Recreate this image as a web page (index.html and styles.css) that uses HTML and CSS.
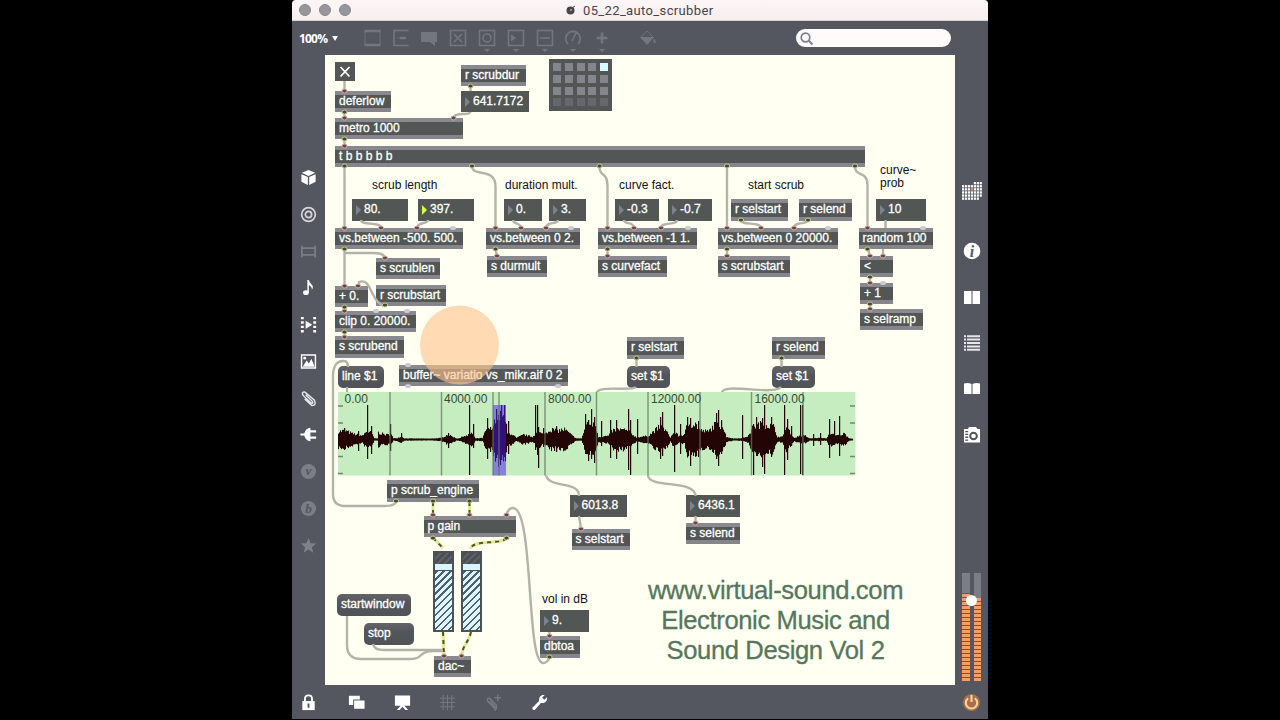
FILE: index.html
```
<!DOCTYPE html>
<html lang="en">
<head>
    <meta charset="UTF-8">
    <meta name="viewport" content="width=device-width, initial-scale=1.0">
    <title>05_22_auto_scrubber</title>
    <link rel="stylesheet" href="styles.css">
</head>
<body>
    <div class="window">
        <header class="titlebar">
            <div class="lights"><span></span><span></span><span></span></div>
            <div class="title">
                <svg width="10" height="10" viewBox="0 0 10 10"><circle cx="4.5" cy="5.5" r="4" fill="#45454a"/><path d="M6 3L9 1" stroke="#45454a"/><circle cx="5" cy="5" r="1" fill="#aaa"/></svg>
                <span>05_22_auto_scrubber</span>
            </div>
        </header>

        <nav class="toolbar">
            <div class="zoomLevel">100% <i></i></div>
            <div class="tools">
                <svg viewBox="0 0 20 26"><path class="thick" d="M2.500 6H18.500M2.500 20H18.500"/><path class="thin" d="M3 6V20M18 6V20"/></svg>
                <svg viewBox="0 0 20 26"><path d="M17.500 5.500H3V20.500H17.500"/><path class="thick" d="M9 13H15"/><path class="thin" d="M6 13H9"/></svg>
                <svg viewBox="0 0 20 26"><path class="solid" d="M2 7H18V17H16V21L11 17H2Z"/></svg>
                <svg viewBox="0 0 20 26"><path d="M2.5 5.5H17.5V20.5H2.5ZM6 9L14 17M14 9L6 17"/></svg>
                <svg viewBox="0 0 20 26"><path d="M2.5 5.5H17.5V20.5H2.5Z"/><circle cx="10" cy="13" r="4"/><path class="solid" d="M7 24H13L10 27Z"/></svg>
                <svg viewBox="0 0 20 26"><path d="M2.5 5.5H17.5V20.5H2.5Z"/><path class="solid" d="M5 9.5L10 13L5 16.5ZM7 24H13L10 27Z"/></svg>
                <svg viewBox="0 0 20 26"><path d="M2.5 5.5H17.5V20.5H2.5ZM5 13H15"/><path class="solid" d="M7 24H13L10 27Z"/></svg>
                <svg viewBox="0 0 20 26"><path d="M5 19A7.3 7.3 0 1 1 15 19M9 16L13 8"/><path class="solid" d="M7 24H13L10 27Z"/></svg>
                <svg viewBox="0 0 20 26"><path class="thick" d="M4.5 13H15.5M10 7.5V18.5"/><path class="solid" d="M7 24H13L10 27Z"/></svg>
            </div>
            <svg class="bucket" viewBox="0 0 20 20"><path class="thin" d="M3 9L9 3L15 9"/><path class="solid" d="M2 9H16L9 17ZM16 10Q19 15 17 15Q14.5 15 16 10Z"/></svg>
            <div class="search">
                <svg width="14" height="14" viewBox="0 0 14 14"><circle cx="5.5" cy="5.5" r="4.3" fill="none" stroke="#7d7f8b" stroke-width="1.7"/><path d="M8.8 8.8L12.5 12.5" stroke="#7d7f8b" stroke-width="2"/></svg>
            </div>
        </nav>

        <main class="middle">
            <aside class="leftbar">
                <svg viewBox="0 0 20 20"><path class="white" d="M10 2L17 5L10 8.3L3 5ZM2.5 6.5L9.3 9.6V18L2.5 14.5ZM17.5 6.5L10.7 9.6V18L17.5 14.5Z"/></svg>
                <svg viewBox="0 0 20 20"><g fill="none" stroke="#d5d6db" stroke-width="1.8"><circle cx="10" cy="10" r="7.2"/><circle cx="10" cy="10" r="3.3"/></g></svg>
                <svg viewBox="0 0 20 20"><path d="M3 4V16M17 4V16M3 6.5H17M3 13.5H17" fill="none" stroke="#7a7c86" stroke-width="1.9"/></svg>
                <svg viewBox="0 0 20 20"><ellipse class="white" cx="7.3" cy="15.5" rx="3" ry="2.5"/><path class="white" d="M8.8 2H10.4Q11 5 13 6.5Q16 9 13.5 12.5Q14 9 10.4 7.5V15.5H8.8Z"/></svg>
                <svg viewBox="0 0 20 20"><path d="M3.5 2V19M16.5 2V19" stroke="#fff" stroke-width="3" stroke-dasharray="2.6 2"/><path class="white" d="M7 6L14 10.3L7 14.5Z"/></svg>
                <svg viewBox="0 0 20 20"><path d="M2.7 3.2H17.3V16.8H2.7Z" fill="none" stroke="#fff" stroke-width="1.5"/><path class="white" d="M4 15.5L8 9L10.5 12L13 7L16.5 15.5Z"/><circle class="white" cx="6" cy="6.5" r="1.5"/></svg>
                <svg viewBox="0 0 20 20"><path d="M7 6L14 13Q15.5 15.5 13 15L4.5 7Q2 3 6 3L16 11.5Q19 17 13.5 17.5L6 10.5" fill="none" stroke="#e8e8ec" stroke-width="1.5"/></svg>
                <svg viewBox="0 0 20 20"><path class="white" d="M1.5 9H5.5Q7 3.5 12 3V5.5H18V7.8H12V12.2H18V14.5H12V17Q7 16.5 5.5 11H1.5Z"/></svg>
                <svg viewBox="0 0 20 20"><circle cx="10" cy="10" r="8" fill="#7b7d87"/><text x="10" y="14">v</text></svg>
                <svg viewBox="0 0 20 20"><circle cx="10" cy="10" r="8" fill="#7b7d87"/><text x="10" y="15">b</text></svg>
                <svg viewBox="0 0 20 20"><path fill="#80828b" d="M10 2L12.2 7.6L18 8L13.5 11.8L15 17.6L10 14.3L5 17.6L6.5 11.8L2 8L7.8 7.6Z"/></svg>
            </aside>

            <section class="patcher" id="patcher">
                <svg class="cords" id="cords" viewBox="325 55 630 630"></svg>
                <div class="credits">www.virtual-sound.com<br>Electronic Music and<br>Sound Design Vol 2</div>
            </section>

            <aside class="rightbar">
                <div class="panels">
                    <svg class="gridIcon" id="gridIcon" viewBox="0 0 22 20"></svg>
                    <svg viewBox="0 0 20 20"><circle class="white" cx="10" cy="10" r="8.3"/><text class="info" x="10" y="15.5">i</text></svg>
                    <svg viewBox="0 0 20 20"><path class="white" d="M2 4H9.5V17H2ZM10.5 4H18V17H10.5Z"/></svg>
                    <svg viewBox="0 0 20 20"><path d="M2 3.2H4M5 3.2H18M2 6.6H4M5 6.6H18M2 10H4M5 10H18M2 13.4H4M5 13.4H18M2 16.8H4M5 16.8H18" stroke="#e6e6ea" stroke-width="2"/></svg>
                    <svg viewBox="0 0 20 20"><path class="white" d="M2 4.5Q6 3.5 9.5 5V15H2ZM10.5 5Q14 3.5 18 4.5V15H10.5Z"/></svg>
                    <svg viewBox="0 0 20 20"><path class="white" d="M2 4H6L7 2H14L15.5 4H18V17.5H2Z"/><circle cx="11.5" cy="11" r="3.3" fill="#fff" stroke="#50535b" stroke-width="2"/><path d="M4.7 6V16" stroke="#50535b" stroke-width="3" stroke-dasharray="1.3 1.5"/></svg>
                </div>
                <div class="volume">
                    <div class="meter"><i style="height: 88px"></i></div>
                    <div class="meter"><i style="height: 83px"></i></div>
                    <b class="knob"></b>
                </div>
            </aside>
        </main>

        <footer class="bottombar">
            <svg viewBox="0 0 20 20"><path d="M6.3 9V6Q6.3 2.5 10 2.5T13.7 6V9" fill="none" stroke="#fff" stroke-width="2"/><path class="white" d="M3.5 8.5H16.5V18H3.5Z"/><path d="M10 11V15.5" stroke="#50535b" stroke-width="2"/></svg>
            <svg viewBox="0 0 20 20"><path class="white" d="M2 3H13.5V6.8H6.5V12.5H2ZM7.5 8H18.5V16.5H7.5Z"/></svg>
            <svg viewBox="0 0 20 20"><path class="white" d="M2 2.5H18V13.5H12L16 18H13L10 14.5L7 18H4L8 13.5H2Z"/></svg>
            <svg viewBox="0 0 20 20"><path d="M5.5 2V18M10 2V18M14.5 2V18M2 5.5H18M2 10H18M2 14.5H18" stroke="#777983"/></svg>
            <svg viewBox="0 0 20 20"><path d="M6 8L11 14Q12.5 15.5 11 16L4 9Q2 5.5 6 5.5L13 13Q14 18 10.5 18M11 5H18M14.5 1.5V8.5" fill="none" stroke="#777983" stroke-width="1.5"/></svg>
            <svg viewBox="0 0 20 20"><path class="white" d="M2.5 15.5L9.5 8.5Q9 4 13 2.2L15.5 2L12.8 4.8L15 7L18 4.6Q18.5 9.5 14 10.5L11.5 10.5L5 17.8Q2 18 2.5 15.5Z"/></svg>
            <svg class="power" viewBox="0 0 20 20"><circle cx="10" cy="10" r="9" fill="#a5714c"/><path d="M6.5 5.5A6 6 0 1 0 13.5 5.5M10 2V9.5" fill="none" stroke="#ffcfa0" stroke-width="2.2"/></svg>
        </footer>
    </div>

    <script src="script.js"></script>
</body>
</html>
```
FILE: styles.css
```
*{
    box-sizing: border-box;
}
body{
    margin: 0;
    background: #000;
    font-family: "Liberation Sans", Arial, sans-serif;
    overflow: hidden;
}
.window{
    width: 696px;
    height: 719px;
    margin-left: 292px;
    display: flex;
    flex-direction: column;
    background: #545760;
    border-radius: 4px 4px 0 0;
    overflow: hidden;
}
svg{
    display: block;
    flex: none;
}
.white{
    fill: #fff;
}
/* title bar */
.titlebar{
    height: 21px;
    display: flex;
    align-items: center;
    background: linear-gradient(#fdf6f8, #f7eeee);
    border-bottom: 1px solid #d8d0d2;
}
.lights{
    display: flex;
    gap: 8px;
    width: 62px;
    padding-left: 7px;
}
.lights span{
    width: 12px;
    height: 12px;
    border-radius: 50%;
    background: #98959c;
    border: 1px solid #88858c;
}
.title{
    display: flex;
    align-items: center;
    gap: 7px;
    margin-left: 212px;
    color: #45454a;
    font-family: Roboto, sans-serif;
    font-size: 13px;
    letter-spacing: 0.36px;
}
/* top toolbar */
.toolbar{
    height: 34px;
    display: flex;
    align-items: center;
    padding: 0 37px 0 7px;
}
.zoomLevel{
    width: 58.5px;
    color: #fff;
    font-family: "Open Sans", sans-serif;
    font-size: 12px;
    font-weight: 700;
    letter-spacing: -0.8px;
    white-space: nowrap;
}
.zoomLevel i{
    display: inline-block;
    margin: 0 0 2px 2px;
    border: 3px solid transparent;
    border-top: 5px solid #fff;
    border-bottom: 0;
}
.tools{
    display: flex;
}
.tools svg{
    width: 20px;
    height: 26px;
    margin: 0 4.4px;
    overflow: visible;
}
.tools path, .tools circle, .bucket path{
    fill: none;
    stroke: #737680;
    stroke-width: 1.6;
}
.tools .thick{
    stroke-width: 2.6;
}
.tools .thin, .bucket .thin{
    stroke-width: 0.8;
}
.tools .solid, .bucket .solid{
    fill: #737680;
    stroke: none;
}
.bucket{
    width: 20px;
    margin-left: 21px;
}
.search{
    width: 155px;
    height: 18px;
    margin-left: auto;
    padding: 3px 4px;
    border-radius: 9px;
    background: #fffbfb;
}
/* side bars */
.middle{
    height: 630px;
    display: flex;
}
.leftbar, .rightbar{
    width: 33px;
}
.leftbar{
    padding-top: 104px;
}
.leftbar svg{
    width: 19px;
    height: 19px;
    margin: 0 0 17.75px 6.5px;
}
.leftbar svg:first-child{
    margin-top: 9px;
}
.leftbar text, .info{
    font: italic bold 12px "Liberation Serif", serif;
    text-anchor: middle;
    fill: #545760;
}
.leftbar text{
    font-size: 14px;
}
.info{
    font-size: 16px;
}
.rightbar{
    display: flex;
    flex-direction: column;
    align-items: center;
    padding: 126px 0 4px;
}
.panels{
    display: flex;
    flex-direction: column;
    align-items: center;
    gap: 26px;
}
.panels svg{
    width: 20px;
    height: 20px;
}
.panels .gridIcon{
    width: 22px;
    margin-bottom: 14px;
}
.volume{
    position: relative;
    display: flex;
    gap: 4px;
    margin-top: auto;
}
.meter{
    width: 7.5px;
    height: 108px;
    display: flex;
    align-items: flex-end;
    background: #7b7d87;
}
.meter i{
    width: 100%;
    background: repeating-linear-gradient(to top, #f79d65 0, #f79d65 3px, #6b5650 3px, #6b5650 4px);
}
.knob{
    position: absolute;
    left: 4px;
    top: 22px;
    width: 11px;
    height: 11px;
    border-radius: 50%;
    background: #fff;
}
/* bottom bar */
.bottombar{
    height: 34px;
    display: flex;
    align-items: center;
    padding: 0 7px;
    gap: 26.8px;
}
.bottombar svg{
    width: 19px;
    height: 19px;
}
.bottombar svg:first-child{
    margin-right: 2px;
}
.bottombar .power{
    margin-left: auto;
}
/* patcher */
.patcher{
    position: relative;
    width: 630px;
    background: #fffff2;
    overflow: hidden;
}
.cords{
    position: absolute;
    z-index: 2;
    width: 630px;
    height: 630px;
}
.node{
    position: absolute;
    padding-left: 4px;
    background: #525755;
    color: #fff;
    font-size: 12px;
    line-height: 21px;
    white-space: nowrap;
    -webkit-text-stroke: 0.3px #fff;
}
.obj{
    border-top: 4px solid #89898f;
    border-bottom: 4px solid #85858b;
    line-height: 12px;
}
.num{
    padding-left: 12px;
}
.num::before{
    content: "";
    position: absolute;
    left: 4px;
    top: 6px;
    border: 5px solid transparent;
    border-left: 5px solid #7c838b;
    border-right: 0;
}
.num.active::before{
    border-left-color: #d8fa4c;
}
.msg{
    border-radius: 5px;
    background: linear-gradient(#646569, #525559 40%, #505357);
}
.comment{
    background: none;
    padding: 0;
    color: #111;
    line-height: 13px;
    white-space: pre;
    -webkit-text-stroke: 0;
}
.matrix{
    position: absolute;
    display: grid;
    grid-template-columns: repeat(5, 8px);
    grid-auto-rows: 8px;
    gap: 3.8px;
    padding: 4px;
    background: #525755;
}
.matrix i{
    background: #85858d;
}
.matrix i:nth-child(5){
    background: #daf8ff;
}
.matrix i:nth-child(n+16){
    background: #66676e;
}
.slider{
    position: absolute;
    border: 2px solid #4d5254;
    background: repeating-linear-gradient(135deg, #dff5ff 0, #dff5ff 3.2px, #4b6570 3.2px, #4b6570 5px);
}
.slider::before{
    content: "";
    display: block;
    height: 11px;
    background: repeating-linear-gradient(135deg, #4b4e52 0, #4b4e52 3px, #5e6268 3px, #5e6268 5px);
}
.slider::after{
    content: "";
    display: block;
    height: 6px;
    background: #d9f5ff;
    border-bottom: 1px solid #4d5254;
}
.cord{
    fill: none;
    stroke: #b3b3aa;
    stroke-width: 2.4;
}
.signal{
    stroke: #e2ea92;
    stroke-width: 3;
}
.signalDash{
    fill: none;
    stroke: #50542c;
    stroke-width: 2;
    stroke-dasharray: 4 4;
}
.inlet{
    fill: #654747;
    stroke: #d5aea6;
}
.outlet{
    fill: #46482f;
    stroke: #c5cb8e;
}
.free{
    fill: #c9cbd2;
}
.ruler{
    font-size: 12px;
    fill: #38493a;
}
.credits{
    position: absolute;
    left: 300.5px;
    top: 521px;
    width: 300px;
    color: #56775b;
    font-size: 25.6px;
    letter-spacing: -0.38px;
    line-height: 29.8px;
    text-align: center;
    white-space: nowrap;
    -webkit-text-stroke: 0.3px #56775b;
}
```
FILE: script.js
```
const patcher = document.querySelector("#patcher");
const cords = document.querySelector("#cords");

// window position of the patcher area
const OX = 325, OY = 55;

// type, x, y, width, text
const nodes = [
    ["obj", 335, 90.5, 56, "deferlow"],
    ["obj", 335, 117.5, 128, "metro 1000"],
    ["obj", 335, 145.5, 529.5, "t b b b b b"],
    ["obj", 461, 64.5, 65, "r scrubdur"],
    ["num", 461, 90.5, 68, "641.7172"],
    ["comment", 372, 179, 70, "scrub length"],
    ["num", 352, 199, 56, "80."],
    ["num active", 418, 199, 56, "397."],
    ["obj", 335, 227.5, 128, "vs.between -500. 500."],
    ["obj", 376, 257.5, 64, "s scrublen"],
    ["obj", 376, 284.5, 70, "r scrubstart"],
    ["obj", 335, 285.5, 33, "+ 0."],
    ["obj", 335, 310.5, 81, "clip 0. 20000."],
    ["obj", 335, 336, 69, "s scrubend"],
    ["msg", 338, 366, 46, "line $1"],
    ["obj", 399, 364.5, 168.5, "buffer~ variatio vs_mikr.aif 0 2"],
    ["comment", 505, 179, 80, "duration mult."],
    ["num", 504, 199, 38, "0."],
    ["num", 549, 199, 37, "3."],
    ["obj", 486, 227.5, 94, "vs.between 0 2."],
    ["obj", 487, 255.5, 60, "s durmult"],
    ["comment", 619, 179, 70, "curve fact."],
    ["num", 615, 199, 44, "-0.3"],
    ["num", 668, 199, 44, "-0.7"],
    ["obj", 598, 227.5, 99, "vs.between -1 1."],
    ["obj", 598, 255.5, 69, "s curvefact"],
    ["comment", 748, 179, 70, "start scrub"],
    ["obj", 731, 199, 57, "r selstart"],
    ["obj", 799, 199, 53, "r selend"],
    ["obj", 717.5, 227.5, 120.5, "vs.between 0 20000."],
    ["obj", 717.5, 255.5, 72.5, "s scrubstart"],
    ["comment", 880, 164, 50, "curve~\nprob"],
    ["num", 876, 199, 50, "10"],
    ["obj", 858.5, 227.5, 74.5, "random 100"],
    ["obj", 860, 255.5, 33, "<"],
    ["obj", 860, 282.5, 33, "+ 1"],
    ["obj", 860, 308.5, 63, "s selramp"],
    ["obj", 627, 337, 57, "r selstart"],
    ["msg", 627, 366, 43, "set $1"],
    ["obj", 772, 337, 53, "r selend"],
    ["msg", 772, 366, 43, "set $1"],
    ["obj", 387, 480, 92, "p scrub_engine"],
    ["obj", 423.5, 515.5, 92.5, "p gain"],
    ["obj", 434, 655.5, 37, "dac~"],
    ["msg", 337, 594, 74, "startwindow"],
    ["msg", 364, 623, 50, "stop"],
    ["comment", 542, 593, 50, "vol in dB"],
    ["num", 540, 610, 49, "9."],
    ["obj", 540, 636, 40, "dbtoa"],
    ["num", 569.5, 495, 57.5, "6013.8"],
    ["obj", 571.5, 528.5, 58.5, "s selstart"],
    ["num", 686, 495, 54, "6436.1"],
    ["obj", 686, 522.5, 54, "s selend"]
];

// place an element on the patcher
function place(cls, x, y, w, h){
    const el = document.createElement("div");
    el.className = cls;
    el.style.left = (x - OX) + "px";
    el.style.top = (y - OY) + "px";
    el.style.width = w + "px";
    el.style.height = h + "px";
    patcher.appendChild(el);
    return el;
}

nodes.forEach(([type, x, y, w, text]) => {
    const h = type == "comment" ? 26 : 21.5;
    place("node " + type, x, y, w, h).textContent = text;
});

// toggle, matrix, gain sliders
place("node", 335, 62, 20, 19);
place("matrix", 549, 59, 63, 52).innerHTML = "<i></i>".repeat(20);
place("slider", 433, 551, 21, 81);
place("slider", 461, 551, 21, 81);

let out = '<path d="M340.5 67L349.5 76.5M349.5 67L340.5 76.5" stroke="#fff" stroke-width="1.8"/>';

// patch cords
const lines = [
    "M344.5 81V91", "M344.5 112V118", "M344.5 139V146", "M344.5 166V227", "M344.5 249V286",
    "M470.5 86V91", "M470.5 112Q470 114 463 114Q454 114 453.5 118",
    "M472 166C472 178 495.5 166 495.5 187V227",
    "M599.5 166C599 178 607.5 170 607.5 187V227",
    "M727 166V227",
    "M855 166C855 178 867.5 170 867.5 185V227",
    "M361 220C361 226 381 221 381 228", "M428 220C428 224 417 222 417 228",
    "M513 220C513 225 521 222 521 228", "M558 220C558 225 546 221 546 228",
    "M624 220C624 225 634 221 634 228", "M677 220C677 226 661 221 661 228",
    "M741 220C741 226 761 221 761 228", "M808 220C808 225 794 221 794 228",
    "M885.5 220V228", "M883 249V256", "M868 249L870 256", "M870 277V283", "M870 304V309",
    "M344.5 253H374Q385 253 385 259", "M385 306C370 303 372 277 359 282V287",
    "M344.5 307V311", "M344.5 332V337",
    "M495.5 249L497 256", "M607.5 249V256", "M727 249V256",
    "M396 502Q395 506 384 506H345Q333 506 333 494V375Q334 360 344 361Q348 361 348 367",
    "M347 387V393",
    "M636.5 358V367", "M781.5 358V367",
    "M636 387C632 392 596 384 596 394", "M781 387C774 396 722 382 722 393",
    "M546 475C549 489 579 480 579 496", "M579 516L581 529",
    "M648 475C648 489 695.5 479 695.5 496", "M695.5 516V523",
    "M549.5 632V637",
    "M549.5 657Q548 663 543 663C526 663 534 508 513 508Q508 508 506.5 515",
    "M347 616V645Q347 659 361 659H410C425 659 417 651 434 651H444V656",
    "M373 644Q374 650 384 650H444"
];
lines.forEach(d => out += `<path class="cord" d="${d}"/>`);

const signals = [
    "M433 502V515", "M469.5 502V515", "M433 538L443 548",
    "M506 538C504 545 472 539 470.5 549", "M443 632L444 656", "M471 632C468 644 463 644 461.5 656"
];
signals.forEach(d => out += `<path class="cord signal" d="${d}"/><path class="signalDash" d="${d}"/>`);

const inlets = [
    [344.5, 91], [344.5, 118], [453.5, 118], [344.5, 146], [344.5, 228], [381, 228], [417, 228], [495.5, 228], [521, 228], [546, 228],
    [607.5, 228], [634, 228], [661, 228], [727, 228], [761, 228], [794, 228], [867.5, 228], [497, 256], [607.5, 256], [727, 256],
    [870, 256], [883, 256], [870, 283], [870, 309], [385, 258], [344.5, 286], [358, 286], [344.5, 311], [344.5, 337],
    [433, 515], [469.5, 515], [506.5, 515], [444, 656], [461.5, 656], [549.5, 636], [581, 529], [695.5, 523]
];
const outlets = [
    [344.5, 112], [344.5, 139], [470.5, 86], [344.5, 166], [472, 166], [599.5, 166], [727, 166], [855, 166],
    [344.5, 249], [495.5, 249], [607.5, 249], [727, 249], [867.5, 249], [741, 220], [808, 220], [870, 277], [870, 304],
    [344.5, 307], [385, 305], [344.5, 332], [636.5, 358], [781.5, 358], [396, 501], [433, 501], [469.5, 501],
    [433, 538], [506.5, 538], [549.5, 657]
];
const free = [[453, 228], [571, 228], [688, 228], [828, 228], [923, 228], [376, 311], [407, 311], [883, 283], [408, 365], [408, 386], [558, 386]];
inlets.forEach(([x, y]) => out += `<ellipse class="inlet" cx="${x}" cy="${y}" rx="2.6" ry="2"/>`);
outlets.forEach(([x, y]) => out += `<ellipse class="outlet" cx="${x}" cy="${y}" rx="2.6" ry="2"/>`);
free.forEach(([x, y]) => out += `<ellipse class="free" cx="${x}" cy="${y}" rx="3" ry="2"/>`);

// waveform~
out += '<rect x="338" y="392" width="517.5" height="83.5" fill="#c5edc0"/>';
out += '<rect x="493" y="405" width="13" height="70.5" fill="#8581df"/>';

// envelope points: x, height above and below the centre line
const env = [
    [338, 7], [344, 8], [352, 5], [362, 3], [366, 7], [371, 6], [374, 0.6], [377, 0.6], [378, 6], [385, 4], [391, 4], [393, 0.6],
    [397, 1], [401, 2.5], [404, 0.6], [430, 0.4], [441, 1], [447, 4], [453, 2], [456, 0.5], [460, 1], [463, 3], [467, 3], [471, 6], [475, 0.6], [482, 1], [486, 9],
    [492, 8], [493, 14], [499, 22], [505, 18], [507, 5], [511, 5], [516, 1], [523, 4], [532, 2], [537, 7], [543, 4], [550, 9],
    [558, 8], [564, 9], [572, 3], [576, 0.6], [581, 0.6], [586, 13], [595, 13], [598, 2], [608, 3], [612, 8], [619, 9], [627, 8],
    [631, 5], [636, 1.5], [648, 3], [653, 7], [660, 12], [666, 7], [670, 1.5], [674, 7], [678, 3], [684, 4], [687, 14], [695, 14],
    [700, 8], [708, 7], [714, 13], [722, 12], [726, 2], [733, 0.5], [742, 0.8], [748, 3], [753, 12], [762, 14], [773, 12], [777, 2],
    [782, 2], [786, 11], [790, 6], [794, 1], [799, 3], [805, 3], [809, 0.6], [818, 1], [826, 0.6], [829, 6], [835, 3], [844, 5],
    [849, 0.6], [853, 0.3]
];
// single transients: x, top, bottom
const spikes = [
    [344, 428, 450], [358, 431, 451], [367, 405, 459], [371, 426, 454], [390, 424, 451], [401, 433, 442], [448, 433, 448], [469, 405, 475], [473, 424, 448],
    [487, 418, 459], [490, 427, 452], [496, 409, 458], [501, 405, 460], [504, 405, 457], [508, 421, 454],
    [535, 405, 450], [537, 405, 455], [538, 427, 468], [543, 428, 447], [556, 426, 452], [585, 414, 454], [588, 420, 461],
    [591, 409, 459], [594, 417, 463], [601, 421, 446], [610, 420, 458], [616, 420, 459], [628, 409, 470], [630, 420, 475], [637, 419, 454],
    [660, 417, 459], [662, 412, 456], [674, 405, 472], [680, 424, 454], [687, 417, 454], [690, 418, 466], [698, 421, 457], [716, 413, 459], [718, 410, 466], [721, 420, 454],
    [742, 415, 459], [753, 424, 475], [756, 417, 456], [762, 418, 467], [764, 405, 474], [771, 417, 457], [784, 405, 475], [787, 419, 460], [791, 426, 446],
    [800, 405, 474], [802, 405, 475], [813, 434, 446], [820, 433, 445], [829, 419, 458], [834, 421, 445], [839, 416, 456]
];
let seed = 7;
function rnd(){
    seed = (seed * 16807) % 2147483647;
    return seed / 2147483647;
}
function barColor(x){
    return x >= 493 && x < 506 ? "#33117d" : "#240505";
}
for (let i = 0; i < env.length - 1; i++){
    const [x0, a0] = env[i];
    const [x1, a1] = env[i + 1];
    for (let x = x0; x < x1; x++){
        const a = a0 + (a1 - a0) * (x - x0) / (x1 - x0);
        const up = a * (0.75 + rnd() * 0.6);
        const down = a * (0.75 + rnd() * 0.6);
        out += `<rect x="${x}" y="${439 - up}" width="1.05" height="${up + down + 1}" fill="${barColor(x)}"/>`;
    }
}
spikes.forEach(([x, top, bottom]) => {
    out += `<rect x="${x}" y="${top}" width="1.2" height="${bottom - top}" fill="${barColor(x)}"/>`;
});

// grid lines, ticks and ruler
[390, 441.5, 493, 499, 545, 596.5, 648, 700, 751.5, 803].forEach(x => {
    out += `<path d="M${x} 392V475.5" stroke="#62745f" stroke-opacity="0.75" stroke-width="1.4"/>`;
});
[406, 423, 456.5, 473.5].forEach(y => {
    out += `<path d="M338 ${y}H343M850 ${y}H855" stroke="#6f8a6d" stroke-width="1.5"/>`;
});
["0.00", "4000.00", "8000.00", "12000.00", "16000.00"].forEach((t, i) => {
    out += `<text class="ruler" x="${[344.5, 444, 548, 651, 754.5][i]}" y="403">${t}</text>`;
});

// click highlight
out += '<circle cx="459.5" cy="345" r="39.5" fill="#ffc48c" fill-opacity="0.62"/>';
cords.innerHTML = out;

// pixel grid icon in the right bar
let cells = "";
for (let r = 0; r < 6; r++){
    for (let c = 0; c < 7; c++){
        if (r == 0 && c < 4 || r == 5 && c > 5) continue;
        const color = r == 2 && c == 3 ? "#e89a68" : "#fff";
        cells += `<rect x="${1 + c * 2.95}" y="${1 + r * 3.1}" width="2.2" height="2.3" fill="${color}"/>`;
    }
}
document.querySelector("#gridIcon").innerHTML = cells;
```
